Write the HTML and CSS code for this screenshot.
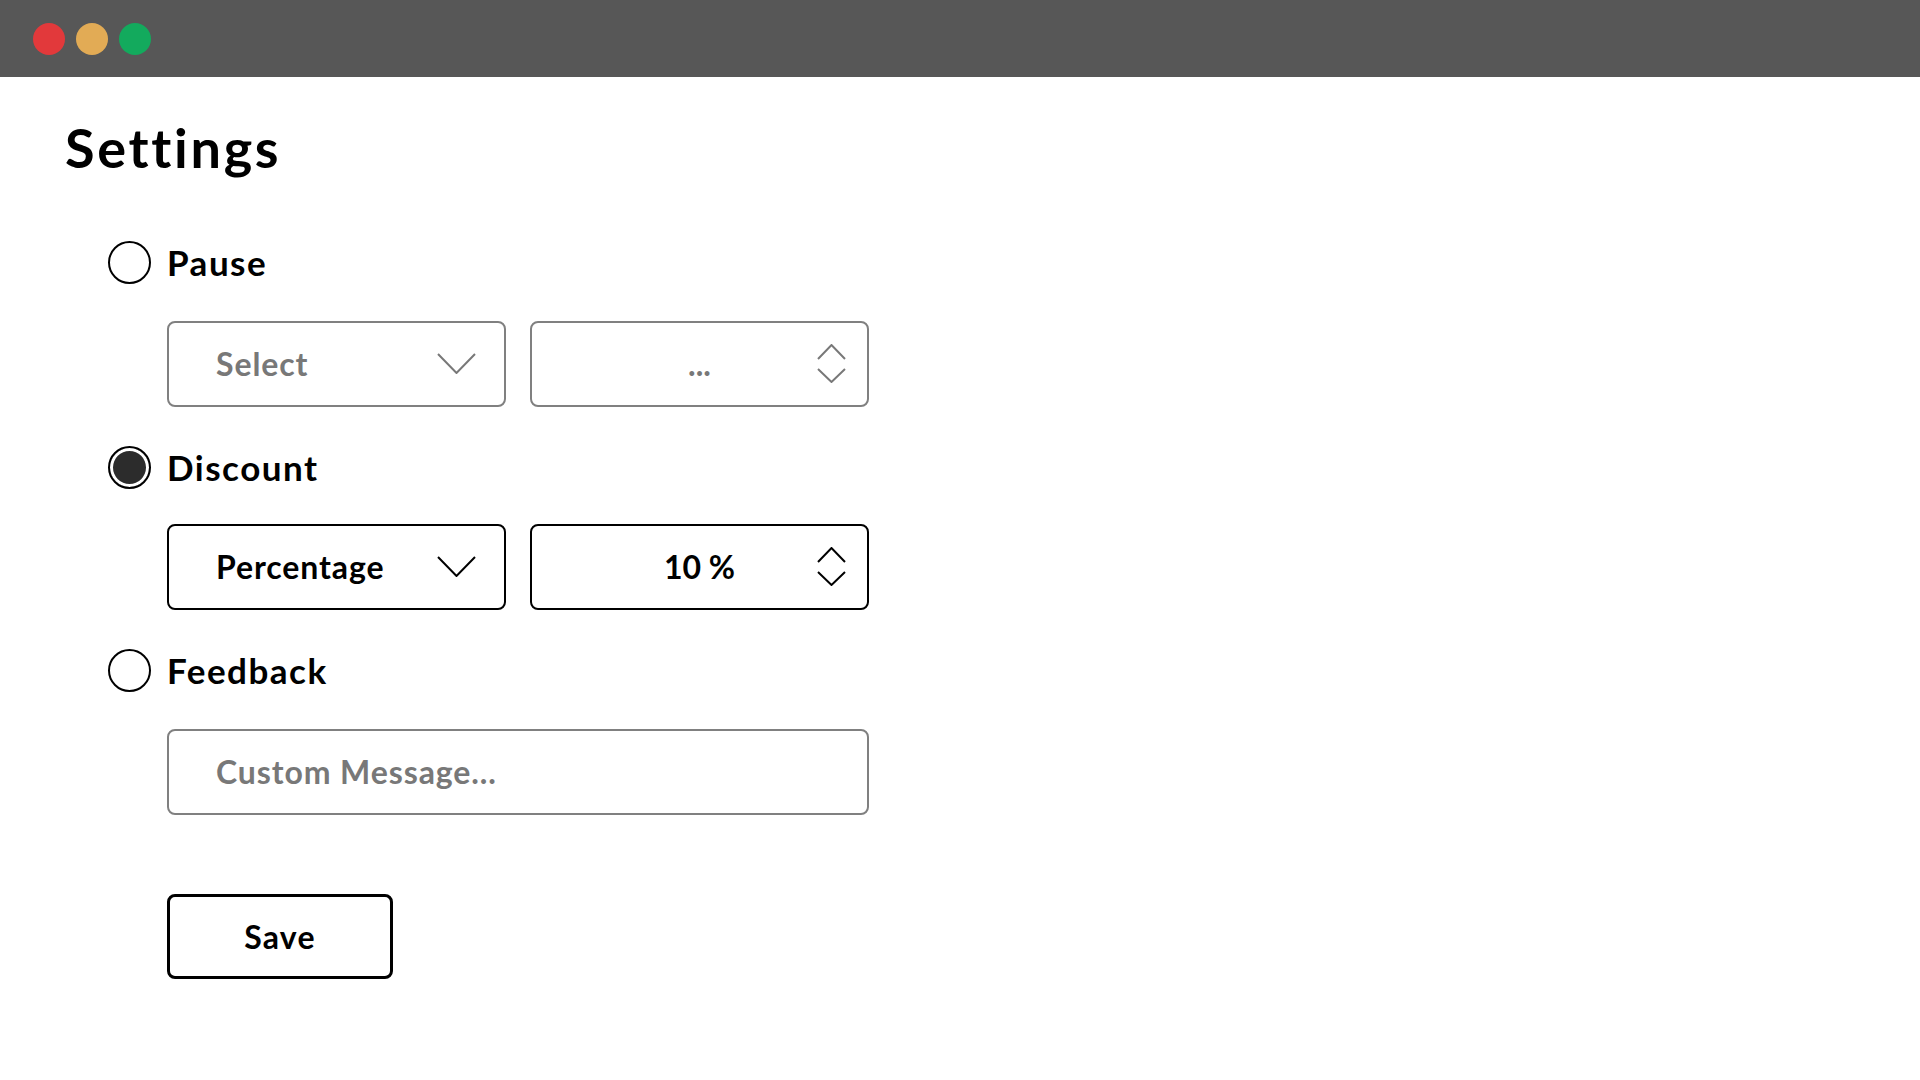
FILE: index.html
```html
<!DOCTYPE html>
<html lang="en">
<head>
<meta charset="utf-8">
<title>Settings</title>
<link rel="stylesheet" href="styles.css">
</head>
<body>
<header class="titlebar">
  <span class="dot dot-red"></span>
  <span class="dot dot-yellow"></span>
  <span class="dot dot-green"></span>
</header>
<main class="content">
  <h1 class="title">Settings</h1>
  <form class="options">
    <section class="group">
      <div class="option"><span class="radio"></span><span class="label">Pause</span></div>
      <div class="fields">
        <div class="box select muted"><span>Select</span>
          <svg class="chev" width="39" height="21" viewBox="0 0 39 21"><polyline points="1,1 19.5,20 38,1" fill="none" stroke="currentColor" stroke-width="2"/></svg>
        </div>
        <div class="box number muted"><span class="num">...</span>
          <svg class="spin" width="29" height="39" viewBox="0 0 29 39"><polyline points="1,15 14.5,1 28,15" fill="none" stroke="currentColor" stroke-width="2"/><polyline points="1,25 14.5,38 28,25" fill="none" stroke="currentColor" stroke-width="2"/></svg>
        </div>
      </div>
    </section>
    <section class="group tight">
      <div class="option"><span class="radio checked"></span><span class="label">Discount</span></div>
      <div class="fields">
        <div class="box select active"><span>Percentage</span>
          <svg class="chev" width="39" height="21" viewBox="0 0 39 21"><polyline points="1,1 19.5,20 38,1" fill="none" stroke="currentColor" stroke-width="2"/></svg>
        </div>
        <div class="box number active"><span class="num">10 %</span>
          <svg class="spin" width="29" height="39" viewBox="0 0 29 39"><polyline points="1,15 14.5,1 28,15" fill="none" stroke="currentColor" stroke-width="2"/><polyline points="1,25 14.5,38 28,25" fill="none" stroke="currentColor" stroke-width="2"/></svg>
        </div>
      </div>
    </section>
    <section class="group">
      <div class="option"><span class="radio"></span><span class="label">Feedback</span></div>
      <div class="fields">
        <div class="box wide muted"><span>Custom Message...</span></div>
      </div>
    </section>
    <div class="actions"><span class="save">Save</span></div>
  </form>
</main>
</body>
</html>
```
FILE: styles.css
```css
* { box-sizing: border-box; }
html, body { margin: 0; padding: 0; background: #ffffff; }
body {
  font-family: "Lato", "Liberation Sans", sans-serif;
  color: #000;
  font-variant-ligatures: none;
  font-feature-settings: "liga" 0, "clig" 0;
}

.titlebar {
  height: 77px;
  background: #575757;
  display: flex;
  align-items: center;
  padding-left: 33px;
  gap: 11px;
}
.dot { width: 32px; height: 32px; border-radius: 50%; display: block; }
.dot-red { background: #e2393b; }
.dot-yellow { background: #e2ab55; }
.dot-green { background: #13aa5d; }

.content { padding-left: 67px; }
.title {
  margin: 39px 0 0 -2px;
  font-size: 54px;
  font-weight: 700;
  line-height: 1.2;
  letter-spacing: 2.7px;
}

.options { display: flex; flex-direction: column; margin-top: 60px; }
.group { display: flex; flex-direction: column; gap: 37px; margin-bottom: 39px; }
.group.tight { gap: 35px; }
.group:last-of-type { margin-bottom: 0; }

.option { display: flex; align-items: center; height: 43px; margin-left: 41px; gap: 16px; }
.radio {
  width: 43px; height: 43px; border-radius: 50%;
  border: 2px solid #000; background: #fff; display: block; flex: none;
}
.radio.checked { box-shadow: inset 0 0 0 3px #fff, inset 0 0 0 20px #2c2c2c; }
.label { font-size: 35px; font-weight: 700; letter-spacing: 1.5px; }

.fields { display: flex; gap: 24px; margin-left: 100px; }
.box {
  height: 86px;
  border: 2px solid #808080;
  border-radius: 8px;
  font-size: 32px;
  font-weight: 700;
  letter-spacing: 0.9px;
  display: flex;
  align-items: center;
}
.box.muted { color: #787878; }
.box.active { border-color: #000; color: #000; }
.select { width: 339px; padding: 0 28px 0 47px; justify-content: space-between; }
.number {
  width: 339px;
  display: grid;
  grid-template-columns: 1fr auto 1fr;
  padding: 0 21px;
  letter-spacing: 0;
}
.number .num { grid-column: 2; }
.number .spin { grid-column: 3; justify-self: end; }
.wide { width: 702px; padding-left: 47px; }
.chev, .spin { display: block; }

.actions { margin-top: 79px; margin-left: 100px; }
.save {
  display: flex; align-items: center; justify-content: center;
  width: 226px; height: 85px;
  border: 3px solid #000; border-radius: 8px;
  font-size: 32px; font-weight: 700; letter-spacing: 1.2px;
}
```
